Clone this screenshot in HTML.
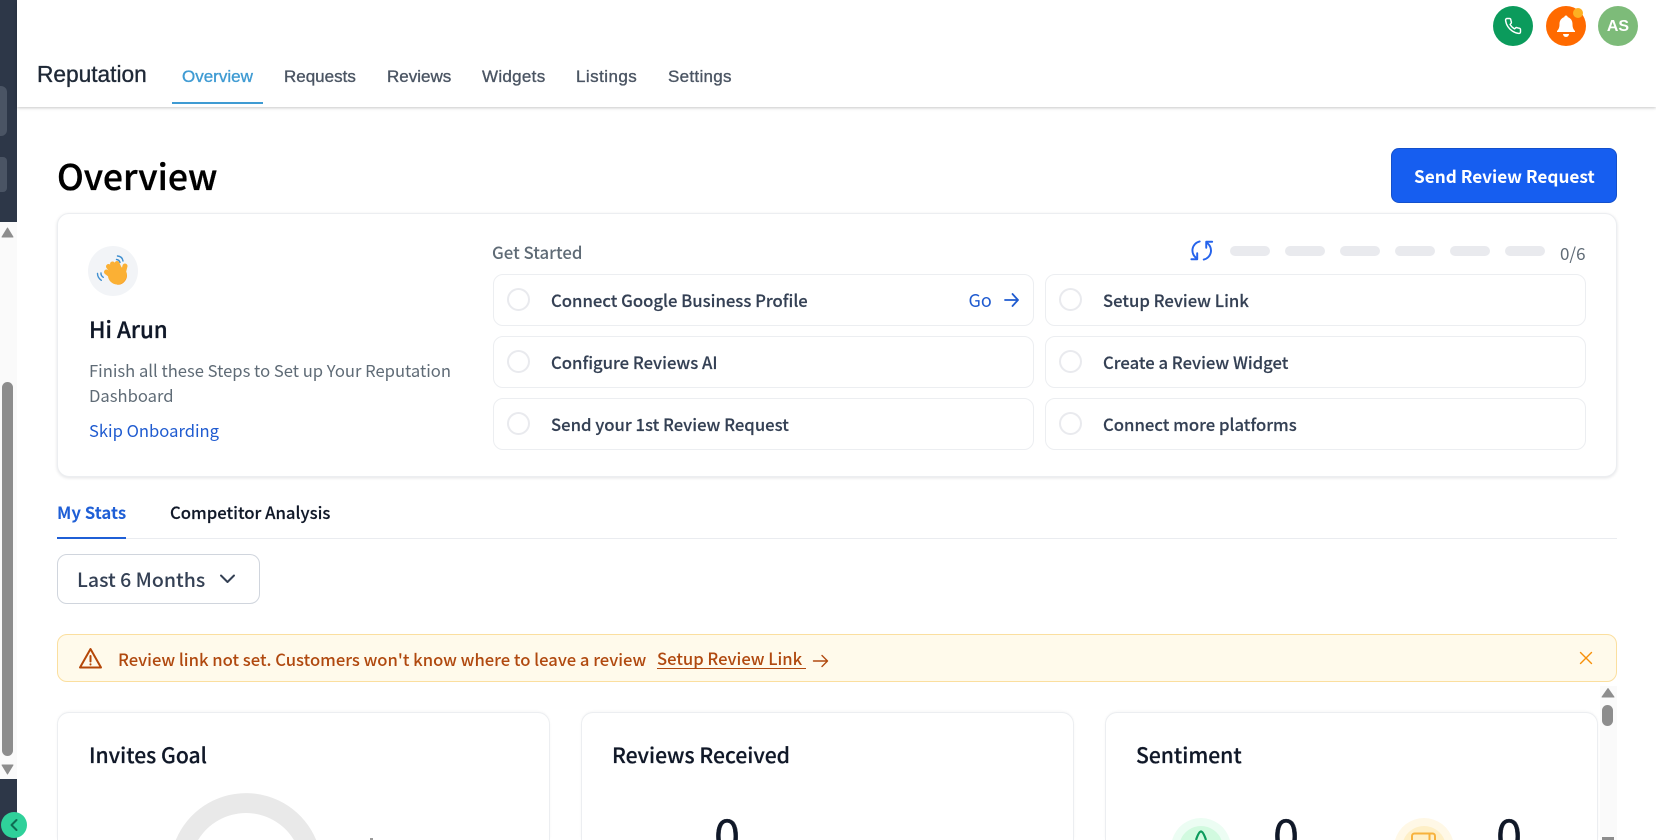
<!DOCTYPE html>
<html lang="en">
<head>
<meta charset="utf-8">
<title>Reputation Overview</title>
<style>
html,body{margin:0;padding:0;width:1656px;height:840px;overflow:hidden;background:#fff}
body{position:relative;font-family:"Noto Sans CJK JP","Liberation Sans",sans-serif;-webkit-font-smoothing:antialiased}
.a{position:absolute;box-sizing:border-box}
.t{position:absolute;white-space:nowrap;line-height:1}
.nav{font-family:"Liberation Sans",sans-serif;font-size:17px;color:#4b5563;top:68px;-webkit-text-stroke:.35px #4b5563}
.row{position:absolute;box-sizing:border-box;height:52px;background:#fff;border:1px solid #eceef1;border-radius:10px}
.rad{position:absolute;box-sizing:border-box;width:23px;height:23px;border:2px solid #e9eaee;border-radius:50%;left:13px;top:13px}
.rt{position:absolute;white-space:nowrap;line-height:1;font-size:16.7px;font-weight:500;color:#344054;left:57px;top:16.500px;-webkit-text-stroke:.15px #344054}
.bar{position:absolute;top:246px;width:40px;height:10px;border-radius:5px;background:#e9eaee}
.card{position:absolute;top:712px;height:128px;background:#fff;border:1px solid #eceef1;border-bottom:none;border-radius:12px 12px 0 0;box-shadow:0 -1px 2px rgba(16,24,40,.03);box-sizing:border-box}
.ct{font-size:21.100px;font-weight:500;color:#101828;top:745px;-webkit-text-stroke:.2px #101828}
.zero{position:absolute;top:809px;height:31px;width:30px;overflow:hidden;font-size:47px;line-height:47px;color:#101828;-webkit-text-stroke:.3px #101828}
</style>
</head>
<body>

<!-- left rail -->
<div class="a" style="left:0;top:0;width:17px;height:222px;background:#2d3748"></div>
<div class="a" style="left:0;top:86px;width:7px;height:50px;background:#4a5464;border-radius:0 6px 6px 0"></div>
<div class="a" style="left:0;top:157px;width:7px;height:35px;background:#4a5464;border-radius:0 4px 4px 0"></div>
<div class="a" style="left:0;top:222px;width:17px;height:557px;background:#fafafa"></div>
<svg class="a" style="left:0;top:222px" width="17" height="22"><path d="M7.500 6L13 15H2z" fill="#8d8d8d" stroke="#8d8d8d" stroke-linejoin="round"/></svg>
<div class="a" style="left:2px;top:382px;width:11px;height:374px;background:#8d8d8d;border-radius:6px"></div>
<svg class="a" style="left:0;top:760px" width="17" height="18"><path d="M7.500 14L2 5h11z" fill="#8d8d8d" stroke="#8d8d8d" stroke-linejoin="round"/></svg>
<div class="a" style="left:0;top:779px;width:17px;height:61px;background:#2d3748"></div>
<div class="a" style="left:1px;top:812px;width:26px;height:26px;border-radius:50%;background:#2fd19a"></div>
<svg class="a" style="left:1px;top:812px" width="26" height="26"><path d="M15.500 8l-5 5 5 5" fill="none" stroke="#0f6b52" stroke-width="2" stroke-linecap="round" stroke-linejoin="round"/></svg>

<!-- header -->
<div class="a" style="left:17px;top:0;width:1639px;height:107px;background:#fff;box-shadow:0 1px 3px rgba(0,0,0,.22)"></div>
<div class="t" style="left:37px;top:63px;font-family:'Liberation Sans',sans-serif;font-size:22.700px;color:#1f2937;-webkit-text-stroke:.35px #1f2937">Reputation</div>
<div class="t nav" style="left:182px;color:#3f9bd3;-webkit-text-stroke:.35px #3f9bd3">Overview</div>
<div class="t nav" style="left:284px">Requests</div>
<div class="t nav" style="left:387px">Reviews</div>
<div class="t nav" style="left:482px;letter-spacing:.3px">Widgets</div>
<div class="t nav" style="left:576px;letter-spacing:.45px">Listings</div>
<div class="t nav" style="left:668px;letter-spacing:.3px">Settings</div>
<div class="a" style="left:172px;top:102px;width:91px;height:2px;background:#3f9bd3"></div>

<!-- top-right buttons -->
<div class="a" style="left:1493px;top:6px;width:40px;height:40px;border-radius:50%;background:#0b9b5c"></div>
<svg class="a" style="left:1504px;top:17px" width="18" height="18" viewBox="0 0 24 24" fill="none" stroke="#fff" stroke-width="1.900" stroke-linecap="round" stroke-linejoin="round"><path d="M22 16.900v3a2 2 0 0 1-2.200 2 19.800 19.800 0 0 1-8.600-3.100 19.500 19.500 0 0 1-6-6A19.800 19.800 0 0 1 2.100 4.200 2 2 0 0 1 4.100 2h3a2 2 0 0 1 2 1.700c.1 1 .4 1.900.7 2.800a2 2 0 0 1-.5 2.100L8.100 9.900a16 16 0 0 0 6 6l1.300-1.300a2 2 0 0 1 2.100-.4c.9.3 1.800.6 2.800.7a2 2 0 0 1 1.700 2z"/></svg>
<div class="a" style="left:1546px;top:6px;width:40px;height:40px;border-radius:50%;background:#ff6a00"></div>
<svg class="a" style="left:1555px;top:14px" width="22" height="24" viewBox="0 0 22 24"><path d="M11 1.500c-1 0-1.700.7-1.700 1.600C6.300 4 4.500 6.700 4.500 10c0 3.500-.8 5.300-2.500 7v1h18v-1c-1.700-1.700-2.500-3.500-2.500-7 0-3.300-1.800-6-4.800-6.900 0-.9-.7-1.600-1.700-1.600z" fill="#fff"/><path d="M8 20h6a3 3 0 0 1-6 0z" fill="#fff"/></svg>
<div class="a" style="left:1573px;top:8px;width:10px;height:10px;border-radius:50%;background:#fdb022"></div>
<div class="a" style="left:1598px;top:6px;width:40px;height:40px;border-radius:50%;background:#7dbb79"></div>
<div class="t" style="left:1598px;width:40px;text-align:center;top:19px;font-family:'Liberation Sans',sans-serif;font-weight:bold;font-size:16px;color:#fff">AS</div>

<!-- page title -->
<div class="t" style="left:57px;top:158px;font-size:35.500px;font-weight:500;color:#000;-webkit-text-stroke:.35px #000">Overview</div>
<div class="a" style="left:1391px;top:148px;width:226px;height:55px;border-radius:8px;background:#165ef0;border:1px solid #1350cc"></div>
<div class="t" style="left:1414px;top:167px;font-size:17.200px;font-weight:700;color:#fff">Send Review Request</div>

<!-- onboarding card -->
<div class="a" style="left:57px;top:213px;width:1560px;height:264px;background:#fff;border:1px solid #eceef1;border-radius:12px;box-shadow:0 1px 3px rgba(16,24,40,.12)"></div>
<div class="a" style="left:88px;top:246px;width:50px;height:50px;border-radius:50%;background:#f2f4f7"></div>
<svg class="a" style="left:88px;top:246px" width="50" height="50" viewBox="0 0 50 50">
  <g fill="none" stroke="#3f8fd0" stroke-width="1.400" stroke-linecap="round"><path d="M28.500 13.500c2 .2 3 1.200 3.500 3"/><path d="M29.500 10c3 .2 5 2.200 5.500 5"/><path d="M13 27c-.2 1.800.6 3.200 2.300 4.300"/><path d="M9.500 27.500c0 3 1.300 5 3.800 6.800"/></g>
  <g stroke="#fbb034" stroke-width="5" stroke-linecap="round"><path d="M25 31L18.500 26"/><path d="M26 27L20.500 20.500"/><path d="M29 25L24.500 18"/><path d="M32.500 25L29 17.500"/><path d="M35 28L37 20"/></g>
  <ellipse cx="29.500" cy="29.500" rx="9.500" ry="9" fill="#fbb034"/>
  <path d="M38.500 25c1.500 7-3 13.500-10 13.700 6.800 1.200 12-6 10-13.700z" fill="#f59a23"/>
</svg>
<div class="t" style="left:89px;top:318px;font-size:22.300px;font-weight:500;color:#101828;-webkit-text-stroke:.3px #101828">Hi Arun</div>
<div class="t" style="left:89px;top:361.500px;font-size:16.600px;color:#5f6b76">Finish all these Steps to Set up Your Reputation</div>
<div class="t" style="left:89px;top:386.500px;font-size:16.600px;color:#5f6b76">Dashboard</div>
<div class="t" style="left:89px;top:421.500px;font-size:16.600px;color:#1f5bd0">Skip Onboarding</div>

<div class="t" style="left:492px;top:244px;font-size:16.800px;font-weight:500;color:#5f6b76">Get Started</div>

<svg class="a" style="left:1190px;top:239px" width="24" height="23" viewBox="-1 -1 26 24" fill="none" stroke="#2563eb" stroke-width="2.100" stroke-linecap="round" stroke-linejoin="round"><path d="M9.500 1.200A10 10 0 0 0 6.600 19.600"/><path d="M.5 20.500L6.800 20.500L6.800 14"/><path d="M13.900 20.800A10 10 0 0 0 16.800 2.400"/><path d="M23 1.500L16.600 1.500L16.600 8"/></svg>
<div class="bar" style="left:1230px"></div>
<div class="bar" style="left:1285px"></div>
<div class="bar" style="left:1340px"></div>
<div class="bar" style="left:1395px"></div>
<div class="bar" style="left:1450px"></div>
<div class="bar" style="left:1505px"></div>
<div class="t" style="left:1560px;top:244px;font-size:17px;color:#5f6b76">0/6</div>

<div class="row" style="left:493px;top:274px;width:541px"><div class="rad"></div><div class="rt">Connect Google Business Profile</div>
  <div class="t" style="left:474.500px;top:16px;font-size:18px;color:#1f5bd0">Go</div>
  <svg class="a" style="left:509px;top:15px" width="17" height="20" viewBox="0 0 17 20" fill="none" stroke="#1f5bd0" stroke-width="1.800" stroke-linecap="round" stroke-linejoin="round"><path d="M2 10h13M9.500 4l5.500 6-5.500 6"/></svg>
</div>
<div class="row" style="left:493px;top:336px;width:541px"><div class="rad"></div><div class="rt">Configure Reviews AI</div></div>
<div class="row" style="left:493px;top:398px;width:541px"><div class="rad"></div><div class="rt">Send your 1st Review Request</div></div>
<div class="row" style="left:1045px;top:274px;width:541px"><div class="rad"></div><div class="rt">Setup Review Link</div></div>
<div class="row" style="left:1045px;top:336px;width:541px"><div class="rad"></div><div class="rt">Create a Review Widget</div></div>
<div class="row" style="left:1045px;top:398px;width:541px"><div class="rad"></div><div class="rt">Connect more platforms</div></div>

<!-- tabs -->
<div class="a" style="left:57px;top:538px;width:1560px;height:1px;background:#eaecf0"></div>
<div class="a" style="left:57px;top:537px;width:69px;height:2px;background:#1f5fd6"></div>
<div class="t" style="left:57px;top:504px;font-size:16.800px;font-weight:700;color:#1f5fd6">My Stats</div>
<div class="t" style="left:170px;top:504px;font-size:16.700px;font-weight:500;color:#101828;-webkit-text-stroke:.15px #101828">Competitor Analysis</div>

<!-- dropdown -->
<div class="a" style="left:57px;top:554px;width:203px;height:50px;background:#fff;border:1px solid #d0d5dd;border-radius:10px"></div>
<div class="t" style="left:77px;top:568.500px;font-size:19.500px;font-weight:500;color:#344054">Last 6 Months</div>
<svg class="a" style="left:218px;top:572px" width="19" height="14" viewBox="0 0 19 14" fill="none" stroke="#344054" stroke-width="2" stroke-linecap="round" stroke-linejoin="round"><path d="M3 3.500l6.500 6.500L16 3.500"/></svg>

<!-- alert -->
<div class="a" style="left:57px;top:634px;width:1560px;height:48px;background:#fffaeb;border:1px solid #fbdf9f;border-radius:10px"></div>
<svg class="a" style="left:78px;top:646px" width="25" height="24" viewBox="0 0 25 24" fill="none" stroke="#b54708" stroke-width="2" stroke-linecap="round" stroke-linejoin="round"><path d="M12.500 3L2 21.500h21z"/><path d="M12.500 10v5.500M12.500 18.300v.2"/></svg>
<div class="t" style="left:118px;top:650.500px;font-size:16.630px;font-weight:500;color:#b0490f">Review link not set. Customers won't know where to leave a review</div>
<div class="t" style="left:657px;top:649.500px;font-size:16.630px;font-weight:500;color:#b0490f">Setup Review Link</div>
<div class="a" style="left:657px;top:668px;width:149px;height:1px;background:#b0490f"></div>
<svg class="a" style="left:812px;top:653px" width="17" height="16" viewBox="0 0 17 16" fill="none" stroke="#b0490f" stroke-width="1.400" stroke-linecap="round" stroke-linejoin="round"><path d="M1.500 8h14M10 2.500L15.500 8 10 13.500"/></svg>
<svg class="a" style="left:1578px;top:650px" width="16" height="16" viewBox="0 0 16 16" fill="none" stroke="#f79009" stroke-width="1.400" stroke-linecap="round"><path d="M2.500 2.500l11 11M13.500 2.500l-11 11"/></svg>

<!-- stat cards -->
<div class="card" style="left:57px;width:493px"></div>
<div class="card" style="left:581px;width:493px"></div>
<div class="card" style="left:1105px;width:493px"></div>
<div class="t ct" style="left:89px">Invites Goal</div>
<div class="t ct" style="left:612px">Reviews Received</div>
<div class="t ct" style="left:1136px">Sentiment</div>

<svg class="a" style="left:160px;top:785px" width="180" height="55"><path d="M15.800 55A76 76 0 0 1 156.200 55L133.900 55A56 56 0 0 0 38.100 55Z" fill="#e9e9e9"/></svg>
<div class="a" style="left:370px;top:838px;width:3px;height:2px;background:#9a9a9a"></div>
<div class="zero" style="left:714px">0</div>

<svg class="a" style="left:1150px;top:790px" width="310" height="50">
  <path d="M22.100 50A30 30 0 0 1 79.900 50Z" fill="#ecfdf3"/>
  <path d="M30.500 50A22 22 0 0 1 71.500 50Z" fill="#d1fadf"/>
  <path d="M46 50C48 44 49.500 41.500 51 41.500S54 44 56 50" fill="none" stroke="#0b9b5c" stroke-width="2.200"/>
  <path d="M245.100 50A30 30 0 0 1 302.900 50Z" fill="#fff8e6"/>
  <path d="M253.500 50A22 22 0 0 1 294.500 50Z" fill="#feefc6"/>
  <path d="M262 50V46a2.500 2.500 0 0 1 2.500-2.500h18A2.500 2.500 0 0 1 285 46v4M279.500 44v6" fill="none" stroke="#f7b23b" stroke-width="2"/>
</svg>
<div class="zero" style="left:1273px">0</div>
<div class="zero" style="left:1496px">0</div>

<!-- inner scrollbar -->
<div class="a" style="left:1600px;top:686px;width:17px;height:154px;background:#fafafa"></div>
<svg class="a" style="left:1600px;top:686px" width="17" height="16"><path d="M8 2.500L14 11H2z" fill="#8d8d8d" stroke="#8d8d8d" stroke-linejoin="round"/></svg>
<div class="a" style="left:1602px;top:705px;width:11px;height:21px;background:#8d8d8d;border-radius:6px"></div>
<div class="a" style="left:1602px;top:837px;width:12px;height:3px;background:#8d8d8d"></div>

</body>
</html>
